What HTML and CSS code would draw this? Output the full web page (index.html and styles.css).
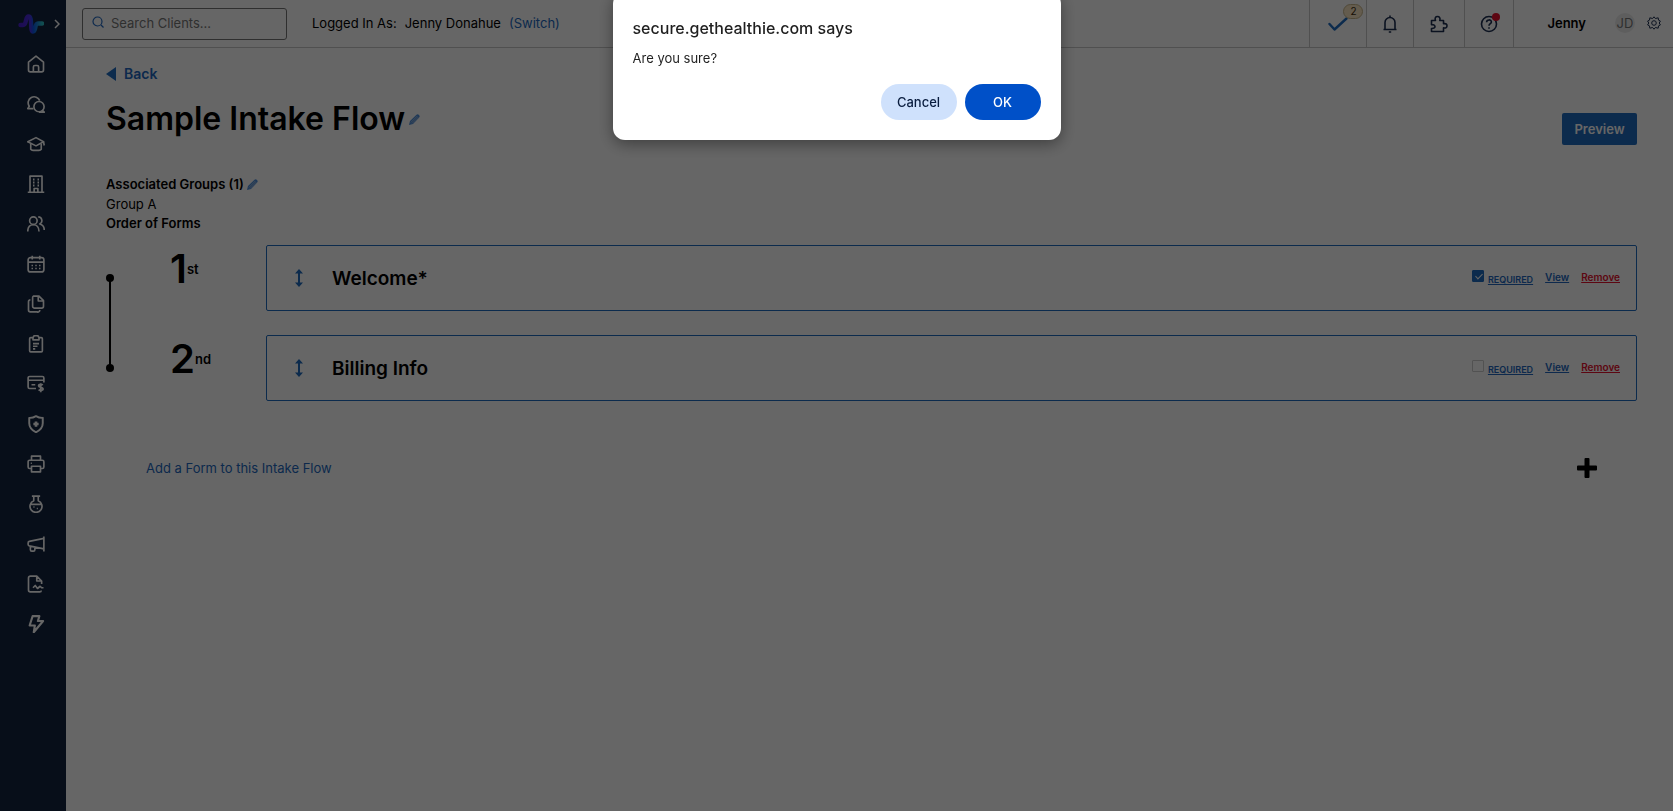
FILE: index.html
```html
<!DOCTYPE html>
<html lang="en">
<head>
    <meta charset="utf-8" />
    <title>Sample Intake Flow</title>
    <link rel="stylesheet" href="styles.css">
</head>

<body>
<div class="app">
    <!-- sidebar -->
    <aside class="sidebar">
        <div class="brand">
            <svg class="logo" width="26" height="22" viewBox="0 0 26 22">
                <defs>
                    <linearGradient id="wave" x1="0" y1="0" x2="1" y2="0">
                        <stop offset="0" stop-color="#4a1fd0" />
                        <stop offset=".45" stop-color="#4a2ee0" />
                        <stop offset=".6" stop-color="#0a55e8" />
                        <stop offset="1" stop-color="#2cc0c8" />
                    </linearGradient>
                </defs>
                <path d="M2.500 12h2.500c4 0 2-8.500 5.500-8.500 4.500 0 1 15 4.500 15 3.500 0 1-8 5-8h4" fill="none" stroke="url(#wave)" stroke-width="4.400" stroke-linecap="round" />
            </svg>
            <button class="expand" type="button" aria-label="Expand menu">
                <svg width="6" height="10" viewBox="0 0 6 10"><path d="M1 1l4 4-4 4" /></svg>
            </button>
        </div>
        <nav class="side-nav">
            <a href="#" aria-label="Home"><svg viewBox="0 0 24 24"><path d="M2 9.500L12 1.500l10 8V20a2.500 2.500 0 0 1-2.500 2.500h-15A2.500 2.500 0 0 1 2 20z" /><path d="M8.500 22v-6a2 2 0 0 1 2-2h3a2 2 0 0 1 2 2v6" /></svg></a>
            <a href="#" aria-label="Chat"><svg viewBox="0 0 24 24"><circle cx="16" cy="15.500" r="6.800" /><path d="M20.500 20.500l2.500 2.300h-7" /><path d="M8.500 18.200H1l2-3.200A8 8 0 1 1 17 7.500" /></svg></a>
            <a href="#" aria-label="Programs"><svg viewBox="0 0 24 24"><path d="M1 9l11-5.500L22 9l-10 5.500z" /><path d="M5 11.500V19q1 1.500 3 1.500h8q2 0 3-1.500v-7.500M22 9l1 5" /></svg></a>
            <a href="#" aria-label="Organization"><svg viewBox="0 0 24 24"><path d="M4 23V1.500h16V23M1 23h22M9.500 23v-5h5v5" /><path d="M8 6h2M14 6h2M8 10h2M14 10h2M8 14h2M14 14h2" stroke-width="2.500" /></svg></a>
            <a href="#" aria-label="Clients"><svg viewBox="0 0 24 24"><circle cx="8.500" cy="7.500" r="5" /><path d="M1 22c0-6 3-9 7.500-9s7.500 3 7.500 9M15 2.500a5 5 0 0 1 2 9.500c4 1 6 4 6 8" /></svg></a>
            <a href="#" aria-label="Calendar"><svg viewBox="0 0 24 24"><rect x="1.500" y="3.500" width="21" height="19" rx="3" /><path d="M1.500 9.500h21M7 1v5M17 1v5" /><path d="M6 14h2M11 14h2M16 14h2M6 18h2M11 18h2M16 18h2" /></svg></a>
            <a href="#" aria-label="Documents"><svg viewBox="0 0 24 24"><path d="M8.500 1.500H16l6 6V15a2.500 2.500 0 0 1-2.500 2.500h-9A2.500 2.500 0 0 1 7.500 15V4a2.500 2.500 0 0 1 1-2.500zM15 1.500V8h7" /><path d="M4.500 6.500A2.500 2.500 0 0 0 2 9v11a2.500 2.500 0 0 0 2.500 2.500h9A2.500 2.500 0 0 0 17 20" /></svg></a>
            <a href="#" aria-label="Forms"><svg viewBox="0 0 24 24"><path d="M8 3.500H5A1.500 1.500 0 0 0 3.500 5v16A1.500 1.500 0 0 0 5 22.500h14a1.500 1.500 0 0 0 1.500-1.500V5A1.500 1.500 0 0 0 19 3.500h-3" /><path d="M8 3.500L9.500 1h5L16 3.500v3H8zM8 11.500h8M8 15h6M8 18.500h3" /></svg></a>
            <a href="#" aria-label="Billing"><svg viewBox="0 0 24 24"><path d="M12 18H3.500A2 2 0 0 1 1.500 16V4a2 2 0 0 1 2-2h17a2 2 0 0 1 2 2v6M1.500 7h21M6 13h5" /><path d="M21 13.500c-1-1.200-5.500-1.500-5.500.8 0 2.700 6 1.500 6 4.400 0 2.300-4.500 2.300-6 .8M18.300 11v12" stroke-width="2.400" /></svg></a>
            <a href="#" aria-label="Insurance"><svg viewBox="0 0 24 24"><path d="M3 3.800c4 .2 6.500-.8 9-2.300 2.500 1.500 5 2.500 9 2.300V11c0 6-4 9.500-9 12-5-2.500-9-6-9-12z" stroke-width="2.600" /><path d="M12 8.500v7M8.500 12h7" stroke-width="3.500" /></svg></a>
            <a href="#" aria-label="Fax"><svg viewBox="0 0 24 24"><path d="M6 7V1.500h12V7M6 18H3.500a2 2 0 0 1-2-2V9a2 2 0 0 1 2-2h17a2 2 0 0 1 2 2v7a2 2 0 0 1-2 2H18" /><path d="M6 15h12v7.500H6zM5 11h1.500" /></svg></a>
            <a href="#" aria-label="Labs"><svg viewBox="0 0 24 24"><path d="M6.500 1.500h11M9 1.500v6.200a8 8 0 1 0 6 0V1.500M4.500 12.500h15" /><path d="M8.500 16h1.500M13 18h1.500" /></svg></a>
            <a href="#" aria-label="Campaigns"><svg viewBox="0 0 24 24"><path d="M22.500 2v20M22.500 4.500L3 8.500a2 2 0 0 0-1.500 2v2A2 2 0 0 0 3 14.500l19.500 4M4.500 15v4.500a2 2 0 0 0 2 2h2a2 2 0 0 0 2-2v-3" /></svg></a>
            <a href="#" aria-label="Reports"><svg viewBox="0 0 24 24"><path d="M19 20.500a2 2 0 0 1-2 2H4.500a2.500 2.500 0 0 1-2.500-2.500V4a2.500 2.500 0 0 1 2.500-2.500H13l6.500 6.500v4M13 1.500V8h6.500" /><path d="M8 17l3-3 3 4 3.500-3 2 2H22" /></svg></a>
            <a href="#" aria-label="Automations"><svg viewBox="0 0 24 24"><path d="M7.500 1.500h9L14.500 8H21.500L9 23l1.500-9H3.500z" stroke-width="2.800" /></svg></a>
        </nav>
    </aside>

    <div class="page">
        <!-- top bar -->
        <header class="topbar">
            <div class="search">
                <svg width="12" height="12" viewBox="0 0 12 12"><circle cx="5.500" cy="5.500" r="4.500" /><path d="M9 9l2.500 2.500" /></svg>
                <input type="text" placeholder="Search Clients..." aria-label="Search Clients" />
            </div>
            <p class="logged-in">
                <span>Logged In As:</span>
                <span>Jenny Donahue</span>
                <a href="#">(Switch)</a>
            </p>
            <div class="tools">
                <a class="tool tool-tasks" href="#" aria-label="Tasks">
                    <svg width="20" height="14" viewBox="0 0 20 14"><path d="M1.500 7l5 5.500L18.500 1.500" /></svg>
                    <span class="badge">2</span>
                </a>
                <a class="tool tool-bell" href="#" aria-label="Notifications">
                    <svg width="18" height="18" viewBox="0 0 18 18"><path d="M2.500 14.500h13M4 14.500V7.500a5 5 0 0 1 10 0v7M9 2.500V.5M7.800 17h2.400" /></svg>
                </a>
                <a class="tool tool-apps" href="#" aria-label="Integrations">
                    <svg width="18" height="18" viewBox="0 0 18 18"><path d="M1.500 5.500h4C4.500 3 5.500 1.500 7.500 1.500S10.500 3 9.800 5.500h3.700v3.300c2.500-.6 3.500.5 3.500 2s-1 2.600-3.500 2.100v3.600h-12v-3c2.500 0 3.500-.8 3.500-2s-1-2-3.500-1.800z" /></svg>
                </a>
                <a class="tool tool-help" href="#" aria-label="Help">
                    <svg width="18" height="18" viewBox="0 0 18 18"><circle cx="9" cy="9" r="7.500" /><path d="M6.600 7.200c0-3 4.800-3 4.800-.2C11.400 8.700 9 8.700 9 10.800M9 12.300v1.400" /></svg>
                    <span class="dot"></span>
                </a>
            </div>
            <div class="user">
                <strong class="user-name">Jenny</strong>
                <span class="avatar">JD</span>
                <button class="settings" type="button" aria-label="Settings">
                    <svg width="14" height="14" viewBox="0 0 14 14"><circle cx="7" cy="7" r="2.300" /><path d="M7 .8l1.400 1.700 2.800-.7.300 2.300 1.900 1L12.200 7l1.200 1.900-1.900 1-.3 2.300-2.800-.7L7 13.200l-1.400-1.700-2.800.7-.3-2.300-1.900-1L1.800 7 .6 5.100l1.900-1 .3-2.300 2.800.7z" /></svg>
                </button>
            </div>
        </header>

        <main class="content">
            <a class="back" href="#">
                <svg width="10" height="14" viewBox="0 0 10 14"><path d="M10 0v14L0 7z" /></svg>
                Back
            </a>

            <div class="title-row">
                <h1>Sample Intake Flow
                    <button class="edit" type="button" aria-label="Edit name"><svg width="11" height="11" viewBox="0 0 11 11"><path d="M0 11l1-4 6.500-6.200q1.200-1 2.500.200t.200 2.500L4 10z" /><path class="stripe" d="M1.800 8.500l6.500-6.500M3 9.500L9.500 3" /></svg></button>
                </h1>
                <button class="btn-preview" type="button">Preview</button>
            </div>

            <section class="groups">
                <h2>Associated Groups (1)
                    <button class="edit" type="button" aria-label="Edit groups"><svg width="11" height="11" viewBox="0 0 11 11"><path d="M0 11l1-4 6.500-6.200q1.200-1 2.500.200t.200 2.500L4 10z" /><path class="stripe" d="M1.800 8.500l6.500-6.500M3 9.500L9.500 3" /></svg></button>
                </h2>
                <p>Group A</p>
                <h2>Order of Forms</h2>
            </section>

            <!-- ordered forms -->
            <ol class="forms">
                <li class="form-row">
                    <span class="step"></span>
                    <div class="order">1<span>st</span></div>
                    <div class="card">
                        <svg class="drag" width="8" height="18" viewBox="0 0 8 18"><path d="M4 0l4 4.500H5v9h3L4 18 0 13.500h3v-9H0z" /></svg>
                        <h3>Welcome*</h3>
                        <div class="actions">
                            <input type="checkbox" id="required1" checked />
                            <label for="required1">REQUIRED</label>
                            <a href="#">View</a>
                            <a class="remove" href="#">Remove</a>
                        </div>
                    </div>
                </li>
                <li class="form-row">
                    <span class="step"></span>
                    <div class="order">2<span>nd</span></div>
                    <div class="card">
                        <svg class="drag" width="8" height="18" viewBox="0 0 8 18"><path d="M4 0l4 4.500H5v9h3L4 18 0 13.500h3v-9H0z" /></svg>
                        <h3>Billing Info</h3>
                        <div class="actions">
                            <input type="checkbox" id="required2" />
                            <label for="required2">REQUIRED</label>
                            <a href="#">View</a>
                            <a class="remove" href="#">Remove</a>
                        </div>
                    </div>
                </li>
            </ol>

            <div class="add-form">
                <a href="#">Add a Form to this Intake Flow</a>
                <button type="button" aria-label="Add form">
                    <svg width="20" height="20" viewBox="0 0 20 20"><path d="M8.500 0h3a1 1 0 0 1 1 1v6.500H19a1 1 0 0 1 1 1v3a1 1 0 0 1-1 1h-6.500V19a1 1 0 0 1-1 1h-3a1 1 0 0 1-1-1v-6.500H1a1 1 0 0 1-1-1v-3a1 1 0 0 1 1-1h6.500V1a1 1 0 0 1 1-1z" /></svg>
                </button>
            </div>
        </main>
    </div>
</div>

<!-- confirm dialog -->
<div class="overlay"></div>
<div class="dialog" role="alertdialog" aria-labelledby="dialog-title" aria-describedby="dialog-text">
    <h2 id="dialog-title">secure.gethealthie.com says</h2>
    <p id="dialog-text">Are you sure?</p>
    <div class="dialog-buttons">
        <button class="cancel" type="button">Cancel</button>
        <button class="ok" type="button">OK</button>
    </div>
</div>
</body>
</html>
```

FILE: styles.css
```css
/* reset */
*{box-sizing:border-box;}
body,h1,h2,h3,p,ol{margin:0; padding:0;}
ol{list-style:none;}
svg{display:block;}
button{border:0; padding:0; background:none; font-family:inherit; cursor:pointer;}

body{font-family:Inter, "Liberation Sans", sans-serif; font-size:13px; line-height:20px; color:#000; background:#fff;}
a{color:#2268c0; text-decoration:none;}

.app{display:flex; min-height:100vh;}

/* sidebar */
.sidebar{flex:none; width:66px; background:#12233f;}
.brand{display:flex; align-items:center; gap:10px; height:47px; padding-left:18px;}
.expand svg{fill:none; stroke:#fff; stroke-width:1.5;}
.side-nav{display:flex; flex-direction:column; gap:22px; padding:8px 0 0 27px;}
.side-nav svg{width:18px; height:18px; fill:none; stroke:#fff; stroke-width:2.2; stroke-linejoin:round;}

.page{flex:1; min-width:0;}

/* top bar */
.topbar{display:flex; align-items:center; height:48px; padding-left:16px; border-bottom:1px solid #c8c8c8;}
.search{display:flex; align-items:center; gap:7px; width:205px; height:32px; padding:0 0 1px 9px; border:1px solid #777; border-radius:3px;}
.search svg{flex:none; margin-bottom:2px; fill:none; stroke:#2268c0; stroke-width:1.2;}
.search input{flex:1; min-width:0; border:0; padding:0; outline:0; background:none; font-family:inherit; font-size:13px;}
.search input::placeholder{color:#777;}
.logged-in{display:flex; gap:8px; margin-left:25px; padding-bottom:1px;}

.tools{display:flex; align-self:stretch; margin-left:auto;}
.tool{position:relative; display:flex; align-items:center; justify-content:center; border-left:1px solid #c8c8c8;}
.tool svg{fill:none; stroke:#1d2f52; stroke-width:1.6; stroke-linejoin:round;}
.tool-tasks{width:57px;}
.tool-tasks svg{stroke:#1f6cc0; stroke-width:2.4; stroke-linecap:round;}
.tool-bell{width:47px;}
.tool-apps{width:51px;}
.tool-help{width:49px;}
.badge{position:absolute; top:4px; left:33px; width:20px; height:15px; border:1px solid #c9b78c; border-radius:8px; background:#f9e6c4; color:#3a2a0a; font-size:10px; line-height:13px; text-align:center;}
.dot{position:absolute; top:13px; left:27px; width:8px; height:8px; border-radius:50%; background:#e8112d;}

.user{display:flex; align-items:center; align-self:stretch; padding:0 12px 1px 33px; border-left:1px solid #c8c8c8;}
.user-name{font-weight:600;}
.avatar{width:20px; height:20px; margin:0 12px 0 29px; border-radius:50%; background:#ececec; color:#777; text-align:center;}
.settings svg{fill:none; stroke:#1d2f52; stroke-width:1;}

/* content */
.content{padding:16px 36px 0 40px;}
.back{display:flex; align-items:center; gap:8px; width:max-content; font-size:14px; font-weight:600;}
.back svg{fill:#1f6cc0;}
.title-row{display:flex; justify-content:space-between; align-items:center; height:70px;}
.title-row h1{display:flex; align-items:center; gap:4px; font-size:32px; line-height:40px; font-weight:600;}
.edit svg{fill:#4f90dc;}
.edit .stripe{stroke:#9fb8d8; stroke-width:1;}
.btn-preview{width:75px; height:32px; margin-top:20px; border-radius:2px; background:#1f6cc0; color:#fff; font-size:13px; font-weight:600;}

.groups{margin-top:21px;}
.groups h2{display:flex; align-items:center; gap:3px; font-size:13px; line-height:19px; font-weight:600;}

.forms{display:flex; flex-direction:column; gap:24px; margin-top:12px;}
.form-row{display:grid; grid-template-columns:64px 96px 1fr; height:66px;}
/* dots joined by a line */
.step{position:relative; align-self:center; width:8px; height:8px; border-radius:50%; background:#000;}
.form-row:first-child .step:after{content:""; position:absolute; top:4px; left:3px; width:2px; height:90px; background:#000;}
.order{display:flex; align-items:center; height:48px; font-size:40px; font-weight:600;}
.order span{font-size:13px;}
.card{display:flex; align-items:center; border:1px solid #1f6cc0; border-radius:2px; padding:0 16px 0 28px;}
.drag{fill:#1f6cc0;}
.card h3{margin-left:29px; padding-top:1px; font-size:19px; font-weight:600;}
.actions{display:flex; align-items:center; margin-left:auto; font-size:10px; font-weight:600;}
.actions input{appearance:none; width:12px; height:12px; margin:0 4px 4px 0; border:1px solid #ccc; border-radius:1px;}
.actions input:checked{border-color:#1f6cc0; background:#1f6cc0;}
.actions input:checked:after{content:""; display:block; width:3px; height:6px; margin:1px 0 0 4px; border:solid #fff; border-width:0 1px 1px 0; transform:rotate(45deg);}
.actions label{padding-top:4px; color:#2268c0; font-size:9px; text-decoration:underline;}
.actions a{margin-left:12px; padding-bottom:2px; text-decoration:underline;}
.actions .remove{color:#e8112d;}

.add-form{display:flex; justify-content:space-between; align-items:center; margin-top:57px; padding:0 40px;}

/* dialog */
.overlay{position:fixed; top:0; right:0; bottom:0; left:0; background:rgba(0,0,0,.6);}
.dialog{position:fixed; top:-8px; left:50%; width:448px; margin-left:-224px; padding:26px 20px 20px; border-radius:12px; background:#fff; box-shadow:0 4px 16px rgba(0,0,0,.4); color:#1f1f1f;}
.dialog h2{font-size:16px; line-height:20px; font-weight:500;}
.dialog p{margin-top:10px;}
.dialog-buttons{display:flex; justify-content:flex-end; gap:8px; margin-top:16px;}
.dialog-buttons button{width:76px; height:36px; border-radius:18px; font-size:13px; font-weight:500;}
.cancel{background:#cfe1fc; color:#0a1d3f;}
.ok{background:#0050c8; color:#fff;}
```
